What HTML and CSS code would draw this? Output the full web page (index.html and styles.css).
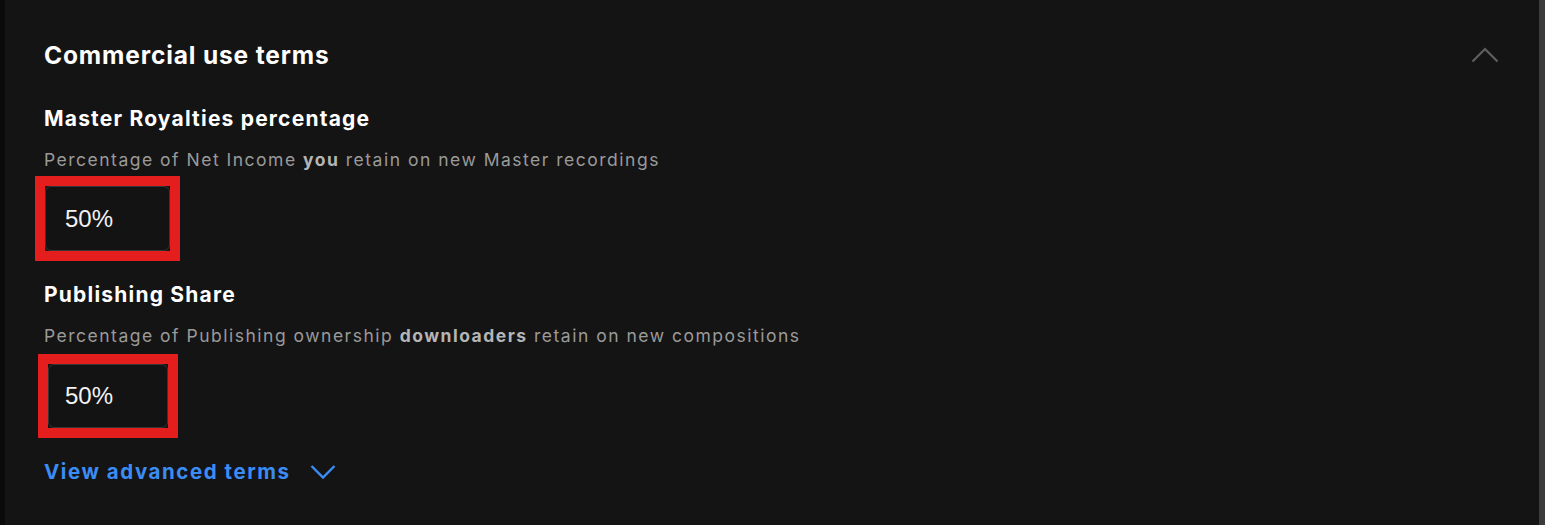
FILE: index.html
```html
<!DOCTYPE html>
<html lang="en">
<head>
<meta charset="utf-8">
<link rel="stylesheet" href="styles.css">
</head>
<body>
<div class="page">
  <div class="edge"></div>
  <section class="panel">
    <header class="panel-head">
      <h2 class="title">Commercial use terms</h2>
      <svg class="chev-up" width="28" height="17" viewBox="0 0 28 17"><path d="M1.5 15.5 L14 3 L26.5 15.5" fill="none" stroke="#5f5f5f" stroke-width="2.2"/></svg>
    </header>
    <div class="field">
      <h3 class="label">Master Royalties percentage</h3>
      <p class="desc">Percentage of Net Income <b>you</b> retain on new Master recordings</p>
      <div class="mark mark-a"><div class="input">50%</div></div>
    </div>
    <div class="field">
      <h3 class="label">Publishing Share</h3>
      <p class="desc">Percentage of Publishing ownership <b>downloaders</b> retain on new compositions</p>
      <div class="mark mark-b"><div class="input">50%</div></div>
    </div>
    <a class="advanced">View advanced terms
      <svg class="chev-down" width="26" height="16" viewBox="0 0 26 16"><path d="M1.5 2 L13 13.5 L24.5 2" fill="none" stroke="#3b8cf5" stroke-width="2.4"/></svg>
    </a>
  </section>
  <div class="scrollbar"></div>
</div>
</body>
</html>
```
FILE: styles.css
```css
html, body {
  margin: 0;
  padding: 0;
  background: #0b0b0b;
}
.page {
  display: flex;
  width: 1545px;
  height: 525px;
  overflow: hidden;
  font-family: "Inter", "Noto Sans", sans-serif;
}
.edge {
  width: 5px;
  background: #0b0b0b;
}
.panel {
  flex: 1;
  background: #141414;
  padding: 39px 40px 0 39px;
  display: flex;
  flex-direction: column;
  align-items: flex-start;
}
.scrollbar {
  width: 6px;
  background: #3c3c3c;
}
.panel-head {
  align-self: stretch;
  display: flex;
  justify-content: space-between;
  align-items: center;
  margin-bottom: 34px;
}
.title {
  margin: 0;
  font-size: 24.5px;
  line-height: 32px;
  font-weight: 700;
  color: #ffffff;
  letter-spacing: 0.85px;
}
.chev-up {
  margin-top: -2px;
}
.field {
  display: flex;
  flex-direction: column;
  align-items: flex-start;
}
.label {
  margin: 0;
  font-size: 21px;
  line-height: 28px;
  font-weight: 700;
  color: #ffffff;
  letter-spacing: 1.2px;
}
.desc {
  margin: 15px 0 0 0;
  font-size: 17.5px;
  line-height: 24px;
  color: #9a9a9a;
  letter-spacing: 1.5px;
}
.desc b {
  color: #b5b5b5;
  font-weight: 700;
}
.mark {
  border: 10px solid #e41d1d;
  box-sizing: border-box;
  display: flex;
}
.mark-a {
  width: 145px;
  height: 85px;
  margin: 4px 0 0 -9px;
}
.mark-b {
  width: 140px;
  height: 84px;
  margin: 6px 0 0 -6px;
}
.input {
  flex: 1;
  border: 1px solid #353535;
  border-radius: 6px;
  background: #131313;
  display: flex;
  align-items: center;
  padding-left: 19px;
  font-family: "Liberation Sans", Arial, sans-serif;
  font-size: 24px;
  color: #f2f2f2;
}
.mark-b .input { padding-left: 16px; }
.field + .field { margin-top: 20px; }
.advanced {
  margin-top: 20px;
  display: flex;
  align-items: center;
  gap: 19px;
  font-size: 20.5px;
  line-height: 28px;
  font-weight: 700;
  color: #3b8cf5;
  letter-spacing: 1.55px;
}
```
